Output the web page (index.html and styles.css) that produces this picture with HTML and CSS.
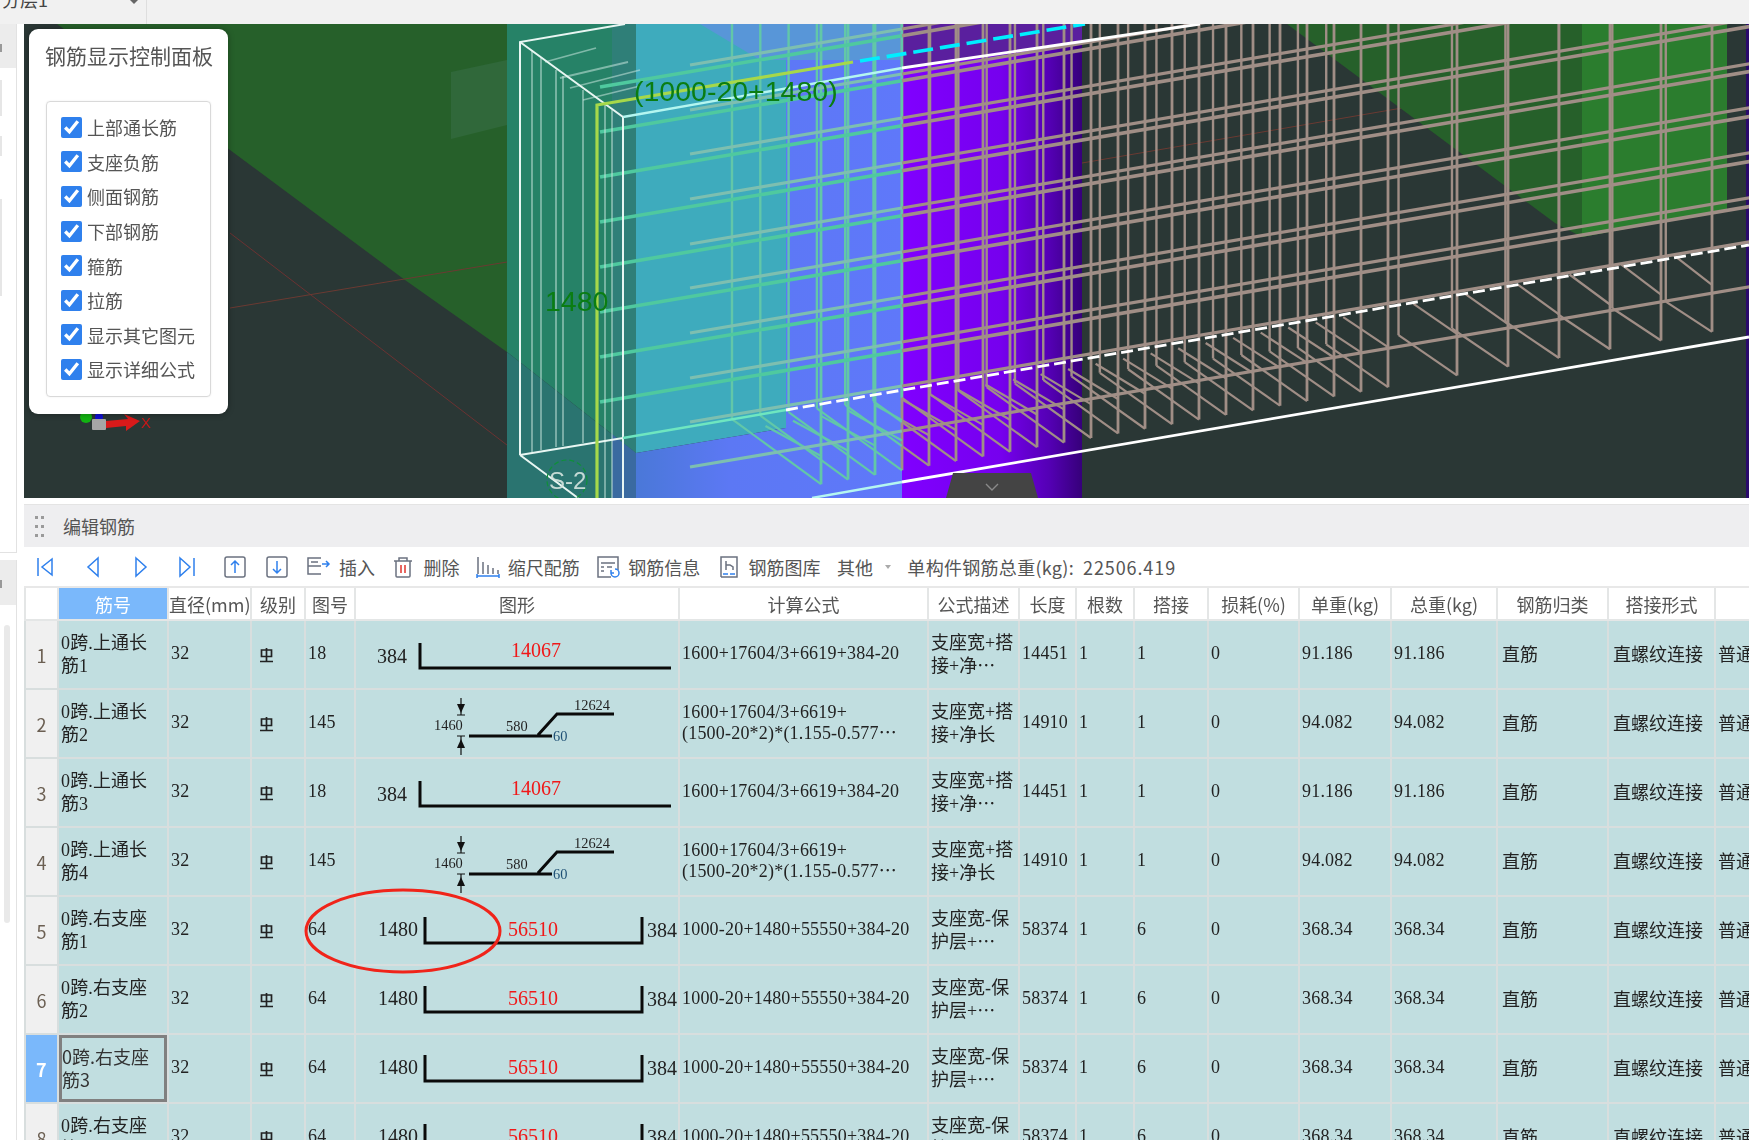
FILE: index.html
```html
<!DOCTYPE html>
<html lang="zh-CN">
<head>
<meta charset="utf-8">
<title>编辑钢筋</title>
<link rel="stylesheet" href="styles.css">
</head>
<body>
<header class="topbar">
  <div class="floor"><span class="floor-name">分层1</span><span class="floor-arrow"></span></div>
</header>
<div class="main">
  <aside class="side">
    <div class="side-a">
      <div class="side-head"><span class="side-mark"></span></div>
      <span class="nub nub1"></span><span class="nub nub2"></span><span class="nub nub3"></span>
    </div>
    <div class="side-b">
      <div class="side-head2"><span class="side-mark"></span></div>
      <span class="thumb"></span>
    </div>
  </aside>
  <section class="content">
    <div class="viewport">
      <svg class="scene" viewBox="24 24 1725 474" xmlns="http://www.w3.org/2000/svg">
        <defs>
          <linearGradient id="pur" x1="0" x2="1" y1="0" y2="0">
            <stop offset="0" stop-color="#8000ff"/>
            <stop offset=".55" stop-color="#7600ee"/>
            <stop offset=".82" stop-color="#5400b4"/>
            <stop offset="1" stop-color="#36007a"/>
          </linearGradient>
          <linearGradient id="blu" x1="0" x2="1" y1="0" y2="0">
            <stop offset="0" stop-color="#4a78d8"/>
            <stop offset=".35" stop-color="#5c78f4"/>
            <stop offset="1" stop-color="#5f78fa"/>
          </linearGradient>
        </defs>
        <rect x="24" y="24" width="1725" height="474" fill="#2a3735"/>
        <polygon points="57,24 507,24 507,352 405,280 230,150" fill="#26602a"/>
        <polygon points="451,72 507,60 507,125 451,139" fill="#30683a"/>
        <line x1="230" y1="233" x2="520" y2="455" stroke="#6b3232" stroke-width="1"/>
        <line x1="230" y1="308" x2="507" y2="262" stroke="#6b3a32" stroke-width="1"/>
        <line x1="1082" y1="163" x2="1402" y2="108" stroke="#6b3a32" stroke-width="1"/>
        <polygon points="1287,24 1555,223 1582,237 1727,210 1727,24" fill="#26602a"/>
        <polygon points="1582,24 1727,24 1727,210 1582,237" fill="#2b7d2e"/>
        <rect x="1746" y="24" width="3" height="474" fill="#2a0a6b"/>
        <polygon points="507,24 636,24 636,453 507,352" fill="#268267"/>
        <polygon points="507,352 636,453 636,498 507,498" fill="#2a7470"/>
        <polygon points="612,24 636,24 636,453 612,434" fill="#2f7f78"/>
        <polygon points="612,434 636,453 636,498 612,498" fill="#3a6aa0"/>
        <polygon points="636,24 786,24 786,428 636,453" fill="#3eabbd"/>
        <polygon points="636,453 786,428 786,24 902,24 902,498 636,498" fill="url(#blu)"/>
        <polygon points="700,24 902,24 902,60 760,60" fill="#5896d8"/>
        <rect x="902" y="24" width="180" height="474" fill="url(#pur)"/>
        <polygon points="902,24 1082,24 1082,42 902,70" fill="#5a1f9e"/>
        <g id="bars"></g>
        <g class="box-faint">
          <line x1="532" y1="50" x2="532" y2="452"/>
          <line x1="541" y1="58" x2="541" y2="450"/>
          <line x1="556" y1="70" x2="556" y2="447"/>
          <line x1="563" y1="76" x2="563" y2="446"/>
          <line x1="583" y1="90" x2="583" y2="443"/>
          <line x1="605" y1="105" x2="605" y2="498"/>
          <line x1="612" y1="110" x2="612" y2="498"/>
          <line x1="545" y1="62" x2="596" y2="48"/>
          <line x1="560" y1="78" x2="628" y2="62"/>
          <line x1="570" y1="88" x2="640" y2="70"/>
          <line x1="583" y1="100" x2="640" y2="86"/>
        </g>
        <path class="box-line" d="M520 455V42L625 24M520 42L623 117V498M520 455L578 498M520 455L623 438"/>
        <path class="box-cyan" d="M623 117L902 68M812 498L902 482"/>
        <path class="box-mint" d="M623 438L786 410"/>
        <path class="box-top" d="M902 68L1200 24"/>
        <path class="box-dash" d="M786 410L1749 245"/>
        <path class="box-bottom" d="M902 482L1749 337"/>
        <path class="rebar-y" d="M597 498V105L853 62"/>
        <path class="rebar-c" d="M860 61L1085 24"/>
        <circle class="s-ring" cx="567" cy="480" r="20"/>
        <text class="lbl-s" x="549" y="489">S-2</text>
        <text class="lbl-g" x="634" y="101">(1000-20+1480)</text>
        <text class="lbl-g" x="545" y="311">1480</text>
        <polygon points="953,473 1031,473 1038,498 946,498" fill="#444"/>
        <path d="M986 484l6 6 6-6" fill="none" stroke="#8a8a8a" stroke-width="1.4"/>
        <circle cx="86" cy="417" r="6" fill="#12b312"/>
        <circle cx="99" cy="417" r="4" fill="#1010d0"/>
        <polygon points="106,421 128,419 124,414 140,421 126,431 126,426 106,428" fill="#d81a1a"/>
        <rect x="92" y="419" width="14" height="11" rx="1" fill="#a6a6a6"/>
        <text class="lbl-x" x="141" y="428">X</text>
      </svg>
      <div class="panel">
        <div class="panel-title">钢筋显示控制面板</div>
        <div class="panel-box">
          <label class="opt"><input type="checkbox" checked>上部通长筋</label>
          <label class="opt"><input type="checkbox" checked>支座负筋</label>
          <label class="opt"><input type="checkbox" checked>侧面钢筋</label>
          <label class="opt"><input type="checkbox" checked>下部钢筋</label>
          <label class="opt"><input type="checkbox" checked>箍筋</label>
          <label class="opt"><input type="checkbox" checked>拉筋</label>
          <label class="opt"><input type="checkbox" checked>显示其它图元</label>
          <label class="opt"><input type="checkbox" checked>显示详细公式</label>
        </div>
      </div>
    </div>
    <div class="editor">
      <div class="ed-head">
        <svg class="grip" viewBox="0 0 9 21"><g fill="#9a9a9a"><rect x="0" y="0" width="3" height="3"/><rect x="6" y="0" width="3" height="3"/><rect x="0" y="9" width="3" height="3"/><rect x="6" y="9" width="3" height="3"/><rect x="0" y="18" width="3" height="3"/><rect x="6" y="18" width="3" height="3"/></g></svg>
        <span>编辑钢筋</span>
      </div>
      <div class="toolbar">
        <div class="nav">
          <svg class="nav-i" viewBox="0 0 22 22"><path d="M4 2v18M18 3L8 11l10 8z"/></svg>
          <svg class="nav-i" viewBox="0 0 22 22"><path d="M16 2L6 11l10 9z"/></svg>
          <svg class="nav-i" viewBox="0 0 22 22"><path d="M6 2l10 9-10 9z"/></svg>
          <svg class="nav-i" viewBox="0 0 22 22"><path d="M2 2l10 9-10 9zM16 2v18"/></svg>
        </div>
        <div class="moves">
          <svg class="move-i" viewBox="0 0 22 22"><rect x="1" y="1" width="20" height="20" rx="2"/><path class="b" d="M11 17V5M7 9l4-4 4 4"/></svg>
          <svg class="move-i" viewBox="0 0 22 22"><rect x="1" y="1" width="20" height="20" rx="2"/><path class="b" d="M11 5v12M7 13l4 4 4-4"/></svg>
        </div>
        <div class="tools">
          <div class="tool">
            <svg class="tool-i" viewBox="0 0 24 22"><path class="g" d="M14 2H1v8h13M1 10v8h13M4 6h7"/><path class="b" d="M15 8h7M19 5l3 3-3 3"/></svg>插入
          </div>
          <div class="tool">
            <svg class="tool-i" viewBox="0 0 24 22"><path class="g" d="M3 5h18M8 5V2h8v3M5 5v15a1 1 0 0 0 1 1h12a1 1 0 0 0 1-1V5"/><path class="r" d="M10 9v8M14 9v8"/></svg>删除
          </div>
          <div class="tool">
            <svg class="tool-i" viewBox="0 0 24 22"><path class="g" d="M2 1v17M7 6v12M12 9v9M17 12v6M22 14v4"/><path class="b" d="M1 20h22M1 18v4M23 18v4"/></svg>缩尺配筋
          </div>
          <div class="tool">
            <svg class="tool-i" viewBox="0 0 24 22"><path class="g" d="M15 21H2V1h20v13M5 7h14M5 11h3M5 15h3M11 11h5"/><path class="b" d="M19 13a4 4 0 1 1-4 4M15 14v3h3"/></svg>钢筋信息
          </div>
          <div class="tool">
            <svg class="tool-i" viewBox="0 0 24 22"><path class="g" d="M4 21V1h16v20H4M9 5v9M9 9h4l3 2v3"/><path class="b" d="M6 18h5M13 18h5"/></svg>钢筋图库
          </div>
          <div class="tool">其他<span class="more"></span></div>
          <div class="tool total">单构件钢筋总重(kg):<span class="total-n">22506.419</span></div>
        </div>
      </div>
      <div class="table-wrap">
        <table class="grid">
          <colgroup>
            <col class="w33"><col class="w110"><col class="w83"><col class="w54"><col class="w50"><col class="w324"><col class="w249"><col class="w91"><col class="w57"><col class="w58"><col class="w74"><col class="w91"><col class="w92"><col class="w106"><col class="w111"><col class="w107"><col class="w100">
          </colgroup>
          <thead>
            <tr>
              <th></th><th class="sel">筋号</th><th>直径(mm)</th><th>级别</th><th>图号</th><th>图形</th><th>计算公式</th><th>公式描述</th><th>长度</th><th>根数</th><th>搭接</th><th>损耗(%)</th><th>单重(kg)</th><th>总重(kg)</th><th>钢筋归类</th><th>搭接形式</th><th></th>
            </tr>
          </thead>
          <tbody>
            <tr>
              <td class="rn">1</td>
              <td class="cn"><i>0</i>跨<i>.</i>上通长<br>筋<i>1</i></td><td>32</td><td><svg class="lvl" viewBox="0 0 13 15"><path d="M1.5 2h10v6.500h-10zM6.500 0v13M0 13.500h13"/></svg></td><td>18</td>
              <td class="sh"><svg class="shape" viewBox="355 1 324 67"><path class="thick" d="M419 23V48H670"/><text class="t16" x="376" y="43">384</text><text class="t16 red" x="510" y="37">14067</text></svg></td>
              <td>1600+17604/3+6619+384-20</td><td class="cn">支座宽<i>+</i>搭<br>接<i>+</i>净⋯</td><td>14451</td><td>1</td><td>1</td><td>0</td><td>91.186</td><td>91.186</td><td class="cn p6">直筋</td><td class="cn p6">直螺纹连接</td><td class="cn">普通</td>
            </tr>
            <tr>
              <td class="rn">2</td>
              <td class="cn"><i>0</i>跨<i>.</i>上通长<br>筋<i>2</i></td><td>32</td><td><svg class="lvl" viewBox="0 0 13 15"><path d="M1.5 2h10v6.500h-10zM6.500 0v13M0 13.500h13"/></svg></td><td>145</td>
              <td class="sh"><svg class="shape" viewBox="355 1 324 67"><path class="thin" d="M460 9V26M456 26H464M460 47V66M456 47H464"/><polygon points="456,15 464,15 460,24"/><polygon points="456,59 464,59 460,50"/><path class="thick2" d="M468 47H551M537 46L556 25H613"/><text class="t12" x="433" y="41">1460</text><text class="t12" x="505" y="42">580</text><text class="t12 bl" x="552" y="52">60</text><text class="t12" x="573" y="21">12624</text></svg></td>
              <td>1600+17604/3+6619+<br>(1500-20*2)*(1.155-0.577⋯</td><td class="cn">支座宽<i>+</i>搭<br>接<i>+</i>净长</td><td>14910</td><td>1</td><td>1</td><td>0</td><td>94.082</td><td>94.082</td><td class="cn p6">直筋</td><td class="cn p6">直螺纹连接</td><td class="cn">普通</td>
            </tr>
            <tr>
              <td class="rn">3</td>
              <td class="cn"><i>0</i>跨<i>.</i>上通长<br>筋<i>3</i></td><td>32</td><td><svg class="lvl" viewBox="0 0 13 15"><path d="M1.5 2h10v6.500h-10zM6.500 0v13M0 13.500h13"/></svg></td><td>18</td>
              <td class="sh"><svg class="shape" viewBox="355 1 324 67"><path class="thick" d="M419 23V48H670"/><text class="t16" x="376" y="43">384</text><text class="t16 red" x="510" y="37">14067</text></svg></td>
              <td>1600+17604/3+6619+384-20</td><td class="cn">支座宽<i>+</i>搭<br>接<i>+</i>净⋯</td><td>14451</td><td>1</td><td>1</td><td>0</td><td>91.186</td><td>91.186</td><td class="cn p6">直筋</td><td class="cn p6">直螺纹连接</td><td class="cn">普通</td>
            </tr>
            <tr>
              <td class="rn">4</td>
              <td class="cn"><i>0</i>跨<i>.</i>上通长<br>筋<i>4</i></td><td>32</td><td><svg class="lvl" viewBox="0 0 13 15"><path d="M1.5 2h10v6.500h-10zM6.500 0v13M0 13.500h13"/></svg></td><td>145</td>
              <td class="sh"><svg class="shape" viewBox="355 1 324 67"><path class="thin" d="M460 9V26M456 26H464M460 47V66M456 47H464"/><polygon points="456,15 464,15 460,24"/><polygon points="456,59 464,59 460,50"/><path class="thick2" d="M468 47H551M537 46L556 25H613"/><text class="t12" x="433" y="41">1460</text><text class="t12" x="505" y="42">580</text><text class="t12 bl" x="552" y="52">60</text><text class="t12" x="573" y="21">12624</text></svg></td>
              <td>1600+17604/3+6619+<br>(1500-20*2)*(1.155-0.577⋯</td><td class="cn">支座宽<i>+</i>搭<br>接<i>+</i>净长</td><td>14910</td><td>1</td><td>1</td><td>0</td><td>94.082</td><td>94.082</td><td class="cn p6">直筋</td><td class="cn p6">直螺纹连接</td><td class="cn">普通</td>
            </tr>
            <tr>
              <td class="rn">5</td>
              <td class="cn"><i>0</i>跨<i>.</i>右支座<br>筋<i>1</i></td><td>32</td><td><svg class="lvl" viewBox="0 0 13 15"><path d="M1.5 2h10v6.500h-10zM6.500 0v13M0 13.500h13"/></svg></td><td>64</td>
              <td class="sh"><svg class="shape" viewBox="355 1 324 67"><path class="thick" d="M424 21V47H641V21"/><text class="t16" x="377" y="40">1480</text><text class="t16 red" x="507" y="40">56510</text><text class="t16" x="646" y="41">384</text></svg></td>
              <td>1000-20+1480+55550+384-20</td><td class="cn">支座宽<i>-</i>保<br>护层<i>+</i>⋯</td><td>58374</td><td>1</td><td>6</td><td>0</td><td>368.34</td><td>368.34</td><td class="cn p6">直筋</td><td class="cn p6">直螺纹连接</td><td class="cn">普通</td>
            </tr>
            <tr>
              <td class="rn">6</td>
              <td class="cn"><i>0</i>跨<i>.</i>右支座<br>筋<i>2</i></td><td>32</td><td><svg class="lvl" viewBox="0 0 13 15"><path d="M1.5 2h10v6.500h-10zM6.500 0v13M0 13.500h13"/></svg></td><td>64</td>
              <td class="sh"><svg class="shape" viewBox="355 1 324 67"><path class="thick" d="M424 21V47H641V21"/><text class="t16" x="377" y="40">1480</text><text class="t16 red" x="507" y="40">56510</text><text class="t16" x="646" y="41">384</text></svg></td>
              <td>1000-20+1480+55550+384-20</td><td class="cn">支座宽<i>-</i>保<br>护层<i>+</i>⋯</td><td>58374</td><td>1</td><td>6</td><td>0</td><td>368.34</td><td>368.34</td><td class="cn p6">直筋</td><td class="cn p6">直螺纹连接</td><td class="cn">普通</td>
            </tr>
            <tr>
              <td class="rn cur">7</td>
              <td class="cn editing">0跨.右支座<br>筋3</td><td>32</td><td><svg class="lvl" viewBox="0 0 13 15"><path d="M1.5 2h10v6.500h-10zM6.500 0v13M0 13.500h13"/></svg></td><td>64</td>
              <td class="sh"><svg class="shape" viewBox="355 1 324 67"><path class="thick" d="M424 21V47H641V21"/><text class="t16" x="377" y="40">1480</text><text class="t16 red" x="507" y="40">56510</text><text class="t16" x="646" y="41">384</text></svg></td>
              <td>1000-20+1480+55550+384-20</td><td class="cn">支座宽<i>-</i>保<br>护层<i>+</i>⋯</td><td>58374</td><td>1</td><td>6</td><td>0</td><td>368.34</td><td>368.34</td><td class="cn p6">直筋</td><td class="cn p6">直螺纹连接</td><td class="cn">普通</td>
            </tr>
            <tr>
              <td class="rn">8</td>
              <td class="cn"><i>0</i>跨<i>.</i>右支座<br>筋<i>4</i></td><td>32</td><td><svg class="lvl" viewBox="0 0 13 15"><path d="M1.5 2h10v6.500h-10zM6.500 0v13M0 13.500h13"/></svg></td><td>64</td>
              <td class="sh"><svg class="shape" viewBox="355 1 324 67"><path class="thick" d="M424 21V47H641V21"/><text class="t16" x="377" y="40">1480</text><text class="t16 red" x="507" y="40">56510</text><text class="t16" x="646" y="41">384</text></svg></td>
              <td>1000-20+1480+55550+384-20</td><td class="cn">支座宽<i>-</i>保<br>护层<i>+</i>⋯</td><td>58374</td><td>1</td><td>6</td><td>0</td><td>368.34</td><td>368.34</td><td class="cn p6">直筋</td><td class="cn p6">直螺纹连接</td><td class="cn">普通</td>
            </tr>
          </tbody>
        </table>
        <svg class="circle-mark" viewBox="0 0 200 86"><ellipse cx="99" cy="43" rx="97" ry="41"/></svg>
      </div>
    </div>
  </section>
</div>
<script src="rebar.js"></script>
</body>
</html>
```
FILE: styles.css
```css
* { box-sizing: border-box; }
html, body { margin: 0; height: 100%; }
body {
  width: 1749px; height: 1140px; overflow: hidden; background: #fff;
  font-family: "Noto Sans CJK SC", "Liberation Sans", sans-serif; font-size: 18px; color: #555;
  display: flex; flex-direction: column;
}
.topbar { height: 24px; flex: none; background: #f1f1f1; display: flex; }
.floor { width: 147px; height: 24px; border-right: 1px solid #dedede; position: relative; overflow: hidden; display: flex; }
.floor-name { margin: -14px 0 0 2px; line-height: 26px; color: #444; }
.floor-arrow { width: 0; height: 0; margin: 0 0 0 auto; position: relative; right: 8px; border: 4px solid transparent; border-top-color: #666; border-bottom: 0; }
.main { flex: 1; display: flex; min-height: 0; }
.side { width: 24px; flex: none; background: #fff; display: flex; flex-direction: column; }
.side-a { width: 17px; height: 529px; flex: none; border-right: 1px solid #e2e2e2; border-bottom: 1px solid #e2e2e2; display: flex; flex-direction: column; align-items: flex-start; }
.side-head { height: 44px; width: 100%; flex: none; background: #ececec; position: relative; }
.side-mark { position: absolute; left: 0; top: 20px; width: 4px; height: 8px; border-left: 2px solid #999; }
.nub { display: block; width: 2px; background: #e6e6e6; }
.nub1 { height: 36px; margin-top: 12px; }
.nub2 { height: 20px; margin-top: 20px; }
.nub3 { height: 97px; margin-top: 43px; }
.side-b { width: 17px; flex: 1; margin-top: 7px; border-right: 1px solid #e2e2e2; display: flex; flex-direction: column; }
.side-head2 { height: 45px; flex: none; background: #ececec; position: relative; }
.thumb { display: block; width: 6px; height: 298px; margin: 20px 0 0 4px; background: #e9e9e9; border-radius: 3px; }
.content { flex: 1; min-width: 0; display: flex; flex-direction: column; }
.viewport { height: 474px; flex: none; position: relative; overflow: hidden; }
.scene { display: block; width: 1725px; height: 474px; filter: blur(.55px); }
.box-faint line { stroke: #c9e6de; stroke-width: 1.8; opacity: .55; }
.box-line { fill: none; stroke: #e8f6f2; stroke-width: 2; }
.box-cyan { fill: none; stroke: #b4f6f0; stroke-width: 2.4; }
.box-mint { fill: none; stroke: #6ee6c0; stroke-width: 2.4; }
.box-top { fill: none; stroke: #fff; stroke-width: 2.8; }
.box-dash { fill: none; stroke: #fff; stroke-width: 2.8; stroke-dasharray: 12 5; }
.box-bottom { fill: none; stroke: #fff; stroke-width: 2.8; }
.rebar-y { fill: none; stroke: #a6d84a; stroke-width: 3.2; }
.rebar-c { fill: none; stroke: #00eeff; stroke-width: 3.6; stroke-dasharray: 20 7; }
.s-ring { fill: none; stroke: #0f8f3a; stroke-width: 1.2; stroke-dasharray: 5 3; }
.lbl-s { font: 24px "Liberation Sans", sans-serif; fill: #d6e6e0; opacity: .9; }
.lbl-g { font: 28.5px "Liberation Sans", sans-serif; fill: #0a7d12; }
.lbl-x { font: 15px "Liberation Sans", sans-serif; fill: #c81818; }
.panel { position: absolute; left: 5px; top: 5px; width: 199px; height: 385px; padding: 12px 17px 0 16px; background: #fff; border-radius: 9px; box-shadow: 0 0 6px rgba(0, 0, 0, .35); filter: blur(.3px); }
.panel-title { font-size: 21px; line-height: 28px; color: #555; white-space: nowrap; margin: 0 -4px 32px 0; }
.panel-box { height: 296px; margin-left: 1px; border: 1px solid #d9d9d9; border-radius: 4px; padding: 8px 0 0 14px; box-shadow: 0 0 2px rgba(0, 0, 0, .08); }
.opt { display: flex; align-items: center; height: 34.6px; white-space: nowrap; color: #555; }
.opt input { width: 21px; height: 21px; margin: 0 5px 0 0; accent-color: #2f80ed; flex: none; }
.editor { margin-top: 6px; flex: 1; min-height: 0; overflow: hidden; border-top: 1px solid #e4e4e4; display: flex; flex-direction: column; }
.ed-head { height: 42px; flex: none; background: #eeeef0; display: flex; align-items: center; padding-left: 11px; gap: 19px; }
.grip { width: 9px; height: 21px; }
.toolbar { height: 41px; flex: none; background: #fff; display: flex; align-items: center; padding: 1px 0 0 10px; border-bottom: 2px solid #e8e8e8; }
.nav { display: flex; gap: 26px; }
.nav-i { width: 22px; height: 22px; fill: none; stroke: #2f80ed; stroke-width: 1.5; }
.moves { display: flex; gap: 20px; margin-left: 24px; }
.move-i { width: 22px; height: 22px; fill: none; stroke: #6b7280; stroke-width: 1.5; }
.move-i .b { stroke: #2f80ed; }
.tools { display: flex; align-items: center; gap: 16.400px; margin-left: 19px; white-space: nowrap; }
.tool { display: flex; align-items: center; gap: 8px; color: #555; }
.tool-i { width: 24px; height: 22px; fill: none; stroke-width: 1.5; }
.tool-i .g { stroke: #6b7280; }
.tool-i .b { stroke: #2f80ed; }
.tool-i .r { stroke: #e0342c; }
.more { width: 0; height: 0; margin-left: 4px; border: 3px solid transparent; border-top: 4px solid #aaa; border-bottom: 0; }
.total { gap: 9px; letter-spacing: .3px; }
.total-n { letter-spacing: .9px; }
.table-wrap { position: relative; flex: 1; min-height: 0; overflow: hidden; filter: blur(.3px); }
.grid { border-collapse: collapse; table-layout: fixed; width: 1790px; }
.w33 { width: 33px; } .w110 { width: 110px; } .w83 { width: 83px; } .w54 { width: 54px; } .w50 { width: 50px; }
.w324 { width: 324px; } .w249 { width: 249px; } .w91 { width: 91px; } .w57 { width: 57px; } .w58 { width: 58px; }
.w74 { width: 74px; } .w92 { width: 92px; } .w106 { width: 106px; } .w111 { width: 111px; } .w107 { width: 107px; } .w100 { width: 100px; }
.grid th { height: 32px; padding: 0; font-weight: 400; font-size: 18px; color: #555; background: #fff; border: 2px solid #e4e6e6; border-top: 0; white-space: nowrap; }
.grid th.sel { background: #7ab8fb; color: #fff; }
.grid td { height: 69px; padding: 0 0 2px 2px; background: #c1dee0; border: 2px solid #d8dede; font: 18px/21px "Liberation Serif", "Noto Sans CJK SC", serif; letter-spacing: .2px; color: #222; white-space: nowrap; vertical-align: middle; }
.grid td.cn { font: 18px/21px "Noto Sans CJK SC", sans-serif; letter-spacing: 0; }
.grid td.p6 { padding-left: 4px; }
.grid td.cn i { font: 18px "Liberation Serif", serif; letter-spacing: .2px; }
.grid td.rn { background: #f0f0f0; padding: 0; text-align: center; font: 18px "Noto Sans CJK SC", sans-serif; color: #6b5f52; }
.grid td.rn.cur { background: #7ab8fb; color: #fff; font-weight: 700; }
.grid td.editing { box-shadow: inset 0 0 0 3px #808080; line-height: 23px; padding-left: 3px; color: #333; }
.grid td.sh { padding: 0; vertical-align: top; letter-spacing: 0; }
.shape { display: block; width: 324px; height: 67px; overflow: visible; }
.shape text { font-family: "Liberation Serif", serif; fill: #222; }
.t16 { font-size: 20px; }
.t12 { font-size: 14.4px; }
.shape .red { fill: #f01818; }
.shape .bl { fill: #1d4f74; }
.thick { fill: none; stroke: #0a0a0a; stroke-width: 3; }
.thick2 { fill: none; stroke: #0a0a0a; stroke-width: 3; }
.thin { fill: none; stroke: #111; stroke-width: 1.2; }
.shape polygon { fill: #111; }
.lvl { display: block; width: 13px; height: 15px; margin: 3px 0 0 6px; fill: none; stroke: #222; stroke-width: 1.7; }
.circle-mark { position: absolute; left: 280px; top: 300px; width: 200px; height: 86px; fill: none; stroke: #f0241a; stroke-width: 3; pointer-events: none; }
```
FILE: rebar.js
```js
// Draws the reinforcement cage of the 3D view: repeated stirrups and longitudinal bars.
(function () {
  var NS = 'http://www.w3.org/2000/svg';
  var host = document.getElementById('bars');
  var SPLIT = 902;

  function seg(x1, y1, x2, y2, c, w) {
    var l = document.createElementNS(NS, 'line');
    l.setAttribute('x1', x1); l.setAttribute('y1', y1);
    l.setAttribute('x2', x2); l.setAttribute('y2', y2);
    l.setAttribute('stroke', c); l.setAttribute('stroke-width', w);
    host.appendChild(l);
  }
  function bar(x1, y1, x2, y2, w, left, right) {
    if (x2 <= SPLIT) return seg(x1, y1, x2, y2, left, w);
    if (x1 >= SPLIT) return seg(x1, y1, x2, y2, right, w);
    var ym = y1 + (y2 - y1) * (SPLIT - x1) / (x2 - x1);
    seg(x1, y1, SPLIT, ym, left, w);
    seg(SPLIT, ym, x2, y2, right, w);
  }

  var TAUPE = '#a08e86', TEAL = '#62c7a8', GREEN = '#4fc99f', GREY = '#7dbfb0';

  // stirrup tips: tight spacing, then the wider zone
  var tips = [];
  for (var x = 821; x <= 1408; x += 27.0) tips.push(x);
  for (var t = 1457; t <= 1760; t += 51) tips.push(t);

  tips.forEach(function (x) {
    var tipY = 425 - 0.171 * (x - 1167);
    var dx = 89 - (x - 821) * 0.048;
    var dy = 65 - (x - 821) * 0.039;
    var col = x < SPLIT ? TEAL : TAUPE;
    var bx = x - dx, by = tipY - dy;
    seg(bx, 24, bx, by, bx < SPLIT ? TEAL : TAUPE, 2.4);
    seg(x, 24, x, tipY, col, 2.8);
    bar(bx, by, x, tipY, 2.2, TEAL, TAUPE);
    var ey = tipY - 31 - (x - 955) * 0.021;
    var ddx = 53 - (x - 955) * 0.019;
    bar(x - ddx, ey - 30, x, ey, 2.2, TEAL, TAUPE);
  });

  [65, 110, 154, 199, 244, 288, 333, 378, 422, 467].forEach(function (y0) {
    bar(690, y0, 1760, y0 - 0.17 * 1070, 3.2, GREY, TAUPE);
  });
  [87, 132, 177, 222, 267, 312, 357, 402].forEach(function (y0) {
    bar(600, y0, 1760, y0 - 0.17 * 1160, 3.6, GREEN, TAUPE);
  });
})();
```
